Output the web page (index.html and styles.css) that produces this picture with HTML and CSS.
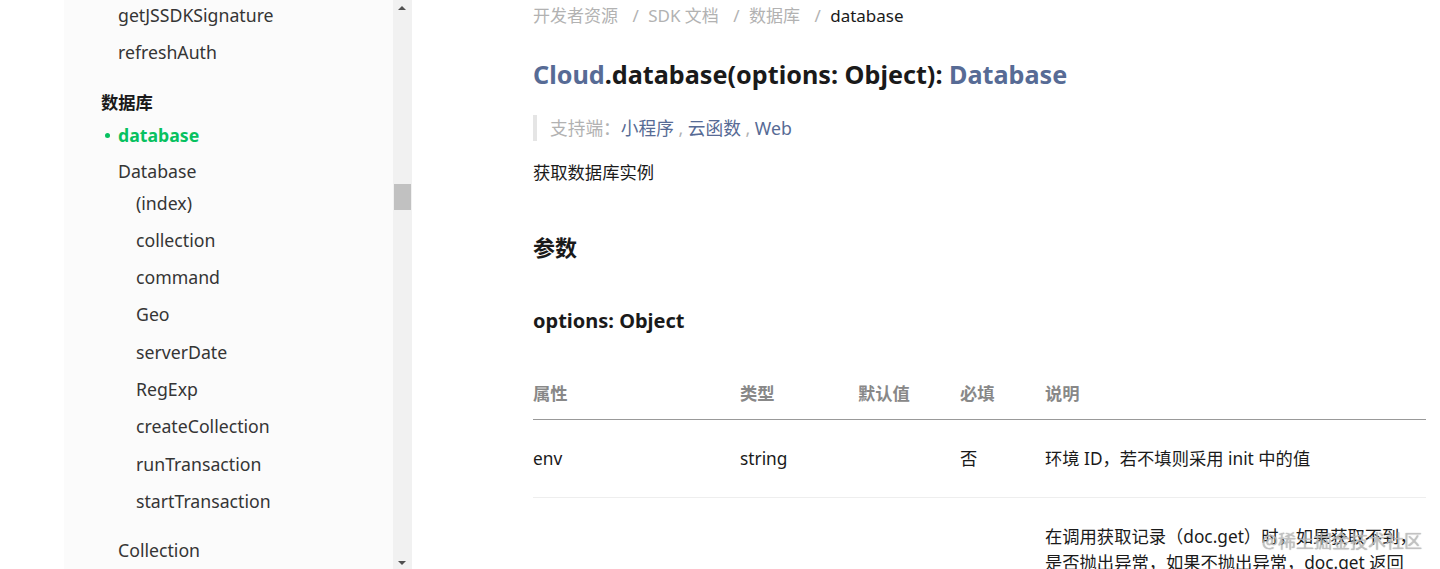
FILE: index.html
```html
<!DOCTYPE html>
<html lang="zh-CN">
<head>
  <meta charset="UTF-8">
  <meta name="viewport" content="width=device-width, initial-scale=1.0">
  <title>database | SDK 文档</title>
  <link rel="stylesheet" href="styles.css">
</head>
<body>
  <div class="page">
    <aside class="sidebar">
      <ul class="nav-list nav-top">
        <li class="nav-item">getJSSDKSignature</li>
        <li class="nav-item">refreshAuth</li>
      </ul>
      <h4 class="nav-group">数据库</h4>
      <ul class="nav-list">
        <li class="nav-item active">database</li>
        <li class="nav-item nav-db">Database</li>
      </ul>
      <ul class="nav-list nav-sub">
        <li class="nav-item">(index)</li>
        <li class="nav-item">collection</li>
        <li class="nav-item">command</li>
        <li class="nav-item">Geo</li>
        <li class="nav-item">serverDate</li>
        <li class="nav-item">RegExp</li>
        <li class="nav-item">createCollection</li>
        <li class="nav-item">runTransaction</li>
        <li class="nav-item">startTransaction</li>
      </ul>
      <ul class="nav-list nav-next">
        <li class="nav-item">Collection</li>
      </ul>
    </aside>

    <div class="scrollbar">
      <span class="arrow arrow-up"></span>
      <span class="thumb"></span>
      <span class="arrow arrow-down"></span>
    </div>

    <main class="content">
      <nav class="breadcrumb">
        <a href="#">开发者资源</a>
        <span class="sep">/</span>
        <a href="#">SDK 文档</a>
        <span class="sep">/</span>
        <a href="#">数据库</a>
        <span class="sep">/</span>
        <span class="current">database</span>
      </nav>

      <h1 class="title"><a href="#">Cloud</a>.database(options: Object): <a href="#">Database</a></h1>

      <blockquote class="support">
        支持端：<a href="#">小程序</a> , <a href="#">云函数</a> , <a href="#">Web</a>
      </blockquote>

      <p class="desc">获取数据库实例</p>

      <h2 class="section">参数</h2>

      <h3 class="subsection">options: Object</h3>

      <table class="params">
        <thead>
          <tr>
            <th class="col-name">属性</th>
            <th class="col-type">类型</th>
            <th class="col-default">默认值</th>
            <th class="col-required">必填</th>
            <th class="col-info">说明</th>
          </tr>
        </thead>
        <tbody>
          <tr>
            <td>env</td>
            <td>string</td>
            <td></td>
            <td>否</td>
            <td>环境 ID，若不填则采用 init 中的值</td>
          </tr>
          <tr>
            <td></td>
            <td></td>
            <td></td>
            <td></td>
            <td>在调用获取记录（doc.get）时，如果获取不到，是否抛出异常，如果不抛出异常，doc.get 返回</td>
          </tr>
        </tbody>
      </table>
    </main>
  </div>

  <div class="watermark">@稀土掘金技术社区</div>
</body>
</html>
```

FILE: styles.css
```css
* {
  box-sizing: border-box;
}
html, body {
  margin: 0;
  padding: 0;
  height: 569px;
  overflow: hidden;
}
body {
  font-family: "Noto Sans", "Noto Sans CJK SC", sans-serif;
  font-size: 17.3px;
  color: #353535;
  background: #fff;
}
a {
  text-decoration: none;
}
.page {
  display: flex;
  height: 569px;
  padding-left: 64px;
}

/* sidebar */
.sidebar {
  width: 329px;
  flex-shrink: 0;
  background: #fbfbfb;
  padding-left: 37px;
  overflow: hidden;
  font-size: 17.7px;
}
.nav-list {
  list-style: none;
  margin: 0;
  padding: 0 0 0 17px;
}
.nav-item {
  line-height: 32px;
  margin-bottom: 5.3px;
  white-space: nowrap;
}
.nav-top {
  margin-top: -1px;
}
.nav-group {
  margin: 19px 0 0;
  font-size: 17.3px;
  font-weight: bold;
  line-height: 32px;
  color: #1a1a1a;
}
.nav-item.active {
  color: #07c160;
  font-weight: bold;
  position: relative;
  margin-bottom: 4px;
}
.nav-item.active::before {
  content: "";
  position: absolute;
  left: -13px;
  top: 14px;
  width: 5px;
  height: 5px;
  border-radius: 50%;
  background: #07c160;
}
.nav-sub {
  padding-left: 35px;
  margin-top: -6px;
}
.nav-next {
  margin-top: 17px;
}

/* fake scrollbar */
.scrollbar {
  width: 19px;
  flex-shrink: 0;
  background: #f1f1f1;
  position: relative;
}
.thumb {
  position: absolute;
  left: 1px;
  right: 1px;
  top: 184px;
  height: 26px;
  background: #c1c1c1;
}
.arrow {
  position: absolute;
  left: 5px;
  width: 0;
  height: 0;
  border-left: 4px solid transparent;
  border-right: 4px solid transparent;
}
.arrow-up {
  top: 6px;
  border-bottom: 4px solid #505050;
}
.arrow-down {
  bottom: 4px;
  border-top: 4px solid #505050;
}

/* main content */
.content {
  flex: 1;
  padding: 0 14px 0 121px;
  overflow: hidden;
}
.breadcrumb {
  font-size: 17px;
  line-height: 32px;
  color: #b2b2b2;
}
.breadcrumb a {
  color: #b2b2b2;
}
.breadcrumb .sep {
  margin: 0 5px 0 10px;
}
.breadcrumb .current {
  color: #1a1a1a;
}
.title {
  margin: 24px 0 0;
  font-size: 25.2px;
  line-height: 36px;
  font-weight: bold;
  color: #1a1a1a;
}
.title a {
  color: #576b95;
}
.support {
  margin: 23px 0 0;
  padding: 0 0 0 13px;
  border-left: 4px solid #e5e5e5;
  line-height: 26px;
  font-size: 17.7px;
  color: #b2b2b2;
}
.support a {
  color: #576b95;
}
.desc {
  margin: 19px 0 0;
  line-height: 26px;
  color: #1a1a1a;
}
.section {
  margin: 45px 0 0;
  font-size: 22px;
  line-height: 32px;
  color: #1a1a1a;
}
.subsection {
  margin: 43px 0 0;
  font-size: 20px;
  line-height: 30px;
  color: #1a1a1a;
}

/* params table */
.params {
  width: 100%;
  margin-top: 45px;
  border-collapse: collapse;
}
.params th {
  text-align: left;
  font-weight: bold;
  color: #888;
  line-height: 26px;
  padding: 0 0 12px;
  border-bottom: 1px solid #999;
}
.params td {
  line-height: 26px;
  padding: 26px 0 25px;
  vertical-align: top;
  color: #1a1a1a;
  border-bottom: 1px solid #eee;
}
.col-name { width: 207px; }
.col-type { width: 118px; }
.col-default { width: 102px; }
.col-required { width: 85px; }

.watermark {
  position: absolute;
  right: 18px;
  bottom: 16px;
  font-size: 18px;
  color: rgba(200, 200, 200, 0.8);
  text-shadow: 0 0 1px rgba(90, 90, 90, 0.6);
}
```
